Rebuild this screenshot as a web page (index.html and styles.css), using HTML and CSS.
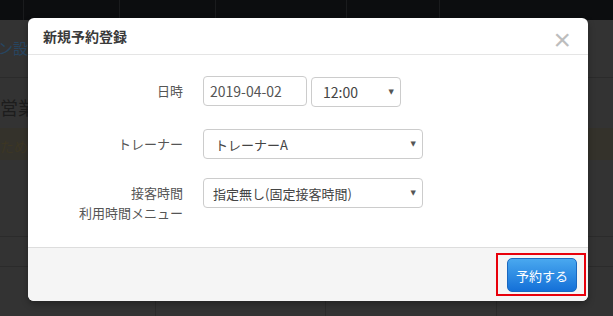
FILE: index.html
```html
<!DOCTYPE html>
<html lang="ja">
<head>
  <meta charset="UTF-8">
  <meta name="viewport" content="width=device-width, initial-scale=1.0">
  <title>新規予約登録</title>
  <link rel="stylesheet" href="styles.css">
</head>
<body>
  <!-- Page behind the dialog (dimmed) -->
  <div class="page">
    <div class="topbar">
      <span class="tb-cell w24"></span>
      <span class="tb-cell w96"></span>
      <span class="tb-cell w96"></span>
      <span class="tb-cell w131"></span>
      <span class="tb-cell w93"></span>
      <span class="tb-cell"></span>
    </div>
    <div class="bg-nav"><span class="bg-link">ン設定</span></div>
    <div class="bg-title">営業時間</div>
    <div class="bg-alert">ための設定</div>
    <div class="bg-space"></div>
    <div class="bg-row"></div>
    <div class="bg-table">
      <span class="bg-cell w156"></span>
      <span class="bg-cell w170"></span>
      <span class="bg-cell w171"></span>
      <span class="bg-cell"></span>
    </div>
  </div>

  <!-- Dialog -->
  <div class="modal">
    <div class="modal-header">
      <h3>新規予約登録</h3>
      <span class="close">&times;</span>
    </div>

    <div class="modal-body">
      <div class="form-row">
        <label class="form-label">日時</label>
        <div class="controls">
          <input type="text" class="input-date" value="2019-04-02">
          <div class="select select-time">
            <select><option>12:00</option></select>
          </div>
        </div>
      </div>

      <div class="form-row">
        <label class="form-label">トレーナー</label>
        <div class="controls">
          <div class="select select-wide">
            <select><option>トレーナーA</option></select>
          </div>
        </div>
      </div>

      <div class="form-row last">
        <label class="form-label">接客時間<br>利用時間メニュー</label>
        <div class="controls">
          <div class="select select-wide">
            <select class="tight"><option>指定無し(固定接客時間)</option></select>
          </div>
        </div>
      </div>
    </div>

    <div class="modal-footer">
      <div class="btn-wrap">
        <button class="btn-primary">予約する</button>
        <span class="mark"></span>
      </div>
    </div>
  </div>
</body>
</html>
```

FILE: styles.css
```css
/* General */
body {
  margin: 0;
  padding: 0;
  background-color: #333;
  font-family: "Noto Sans CJK JP", "Noto Sans", sans-serif;
  color: #333;
  overflow: hidden;
}

/* Dimmed page */
.page {
  width: 613px;
  height: 316px;
}

.topbar {
  display: flex;
  height: 20px;
  background-color: #0c0d0f;
}

.tb-cell {
  flex: none;
  height: 100%;
  border-right: 1px solid #1a1b1d;
}

.tb-cell:last-child {
  flex: 1;
  border-right: none;
}

.w24 { width: 23px; }
.w96 { width: 95px; }
.w131 { width: 130px; }
.w93 { width: 92px; }

.bg-nav {
  height: 58px;
  box-sizing: border-box;
  border-bottom: 1px solid #2b2b2b;
  display: flex;
  align-items: center;
}

.bg-link {
  color: #274560;
  font-size: 15px;
  margin-top: -2px;
  margin-left: -2px;
}

.bg-title {
  height: 50px;
  line-height: 58px;
  font-size: 18px;
  color: #1c1c1c;
}

.bg-alert {
  height: 32px;
  line-height: 36px;
  background-color: #34322b;
  color: #3c3624;
  font-size: 14px;
}

.bg-space {
  height: 76px;
  border-bottom: 1px solid #2b2b2b;
}

.bg-row {
  height: 29px;
  border-bottom: 1px solid #2b2b2b;
}

.bg-table {
  display: flex;
  height: 50px;
}

.bg-cell {
  flex: none;
  border-right: 1px solid #2b2b2b;
}

.bg-cell:last-child {
  flex: 1;
  border-right: none;
}

.w156 { width: 155px; }
.w170 { width: 169px; }
.w171 { width: 170px; }

/* Modal */
.modal {
  position: absolute;
  left: 28px;
  top: 18px;
  width: 560px;
  background-color: #fff;
  border-radius: 6px;
  box-shadow: 0 3px 7px rgba(0, 0, 0, 0.3);
}

.modal-header {
  height: 36px;
  padding: 0 17px 0 15px;
  border-bottom: 1px solid #e5e5e5;
  display: flex;
  align-items: center;
  justify-content: space-between;
}

.modal-header h3 {
  margin: 0;
  font-size: 14px;
  font-weight: bold;
  color: #3a3a3a;
}

.close {
  font-family: "Liberation Sans", sans-serif;
  font-size: 30px;
  line-height: 20px;
  color: #bdbdbd;
  margin-top: 8px;
}

.modal-body {
  padding: 21px 15px 24px;
}

.form-row {
  display: flex;
  align-items: flex-start;
  margin-bottom: 22px;
}

.form-row:nth-child(2) {
  margin-bottom: 19px;
}

.form-row.last {
  margin-bottom: 0;
}

.form-label {
  width: 140px;
  margin-right: 20px;
  padding-top: 5px;
  line-height: 20px;
  text-align: right;
  font-size: 13px;
  color: #555;
}

.controls {
  display: flex;
  align-items: flex-start;
}

.input-date {
  width: 104px;
  height: 30px;
  box-sizing: border-box;
  margin: 0;
  padding: 0 6px;
  border: 1px solid #ccc;
  border-radius: 4px;
  font-family: inherit;
  font-size: 14px;
  color: #555;
  outline: none;
}

.select {
  position: relative;
}

.select select {
  width: 100%;
  height: 30px;
  box-sizing: border-box;
  margin: 0;
  padding: 0 20px 0 11px;
  border: 1px solid #ccc;
  border-radius: 4px;
  background-color: #fff;
  font-family: inherit;
  font-size: 13px;
  color: #444;
  -webkit-appearance: none;
  appearance: none;
  outline: none;
}

.select select.tight {
  padding-left: 9px;
}

.select::after {
  content: "\25BC";
  position: absolute;
  right: 7px;
  top: 10px;
  font-family: "DejaVu Sans", sans-serif;
  font-size: 7px;
  line-height: 10px;
  color: #555;
  pointer-events: none;
}

.select-time {
  width: 90px;
  margin-left: 4px;
  margin-top: 1px;
}

.select-time select {
  font-size: 14px;
}

.select-wide {
  width: 220px;
}

/* Footer */
.modal-footer {
  padding: 10px 11px 9px;
  border-top: 1px solid #ddd;
  background-color: #f5f5f5;
  border-radius: 0 0 6px 6px;
  display: flex;
  justify-content: flex-end;
}

.btn-wrap {
  position: relative;
}

.btn-primary {
  display: block;
  width: 70px;
  height: 34px;
  padding: 0;
  border: 1px solid #1a68c0;
  border-radius: 5px;
  background: linear-gradient(#49a8ef, #1470d8);
  color: #fff;
  font-family: inherit;
  font-size: 13px;
  cursor: pointer;
}

.mark {
  position: absolute;
  left: -11px;
  top: -5px;
  right: -9px;
  bottom: -4px;
  border: 2px solid #e8000b;
}
```
